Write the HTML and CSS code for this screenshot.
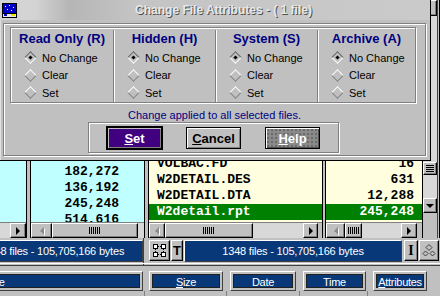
FILE: index.html
```html
<!DOCTYPE html>
<html lang="en">
<head>
  <meta charset="UTF-8">
  <meta name="viewport" content="width=device-width, initial-scale=1.0">
  <link rel="stylesheet" href="styles.css">
  <title>Change File Attributes</title>
</head>
<body>

  <div class="fm">
    <div class="panes">
      <div class="col col-a cyan">
        <div class="list"></div>
        <div class="hscroll">
          <div class="track"></div>
          <div class="sbtn sb-16"><span class="arr-r"></span></div>
        </div>
      </div>
      <div class="gap gap-3"></div>
      <div class="col col-b cyan">
        <div class="list list-b">
          <div class="row">97,152</div>
          <div class="row">182,272</div>
          <div class="row">136,192</div>
          <div class="row">245,248</div>
          <div class="row">514,616</div>
        </div>
        <div class="hscroll">
          <div class="sbtn sb-21"><span class="arr-l"></span></div>
          <div class="thumb th-86"><span class="grip"></span></div>
          <div class="track"></div>
        </div>
      </div>
      <div class="gap gap-3"></div>
      <div class="col col-c yellow">
        <div class="list list-c">
          <div class="row">VOLBAC.CF</div>
          <div class="row">VOLBAC.FD</div>
          <div class="row">W2DETAIL.DES</div>
          <div class="row">W2DETAIL.DTA</div>
          <div class="row sel">W2detail.rpt</div>
        </div>
        <div class="hscroll">
          <div class="sbtn sb-16"><span class="arr-l"></span></div>
          <div class="thumb th-88"><span class="grip"></span></div>
          <div class="track"></div>
          <div class="sbtn sb-15"><span class="arr-r"></span></div>
          <div class="pad-4"></div>
        </div>
      </div>
      <div class="gap gap-2"></div>
      <div class="col col-d yellow">
        <div class="list list-d">
          <div class="row">2,048</div>
          <div class="row">16</div>
          <div class="row">631</div>
          <div class="row">12,288</div>
          <div class="row sel">245,248</div>
        </div>
        <div class="hscroll">
          <div class="sbtn sb-19"><span class="arr-l"></span></div>
          <div class="thumb th-17"><span class="grip"></span></div>
          <div class="track"></div>
          <div class="sbtn sb-16"><span class="arr-r"></span></div>
          <div class="pad-5"></div>
        </div>
      </div>
      <div class="vscroll">
        <div class="vbtn vb-up"></div>
        <div class="vtrack vt-top"></div>
        <div class="vthumb"><span class="vgrip"></span></div>
        <div class="vtrack vt-mid"></div>
        <div class="vbtn vb-down"><span class="arr-d"></span></div>
        <div class="vcorner"></div>
      </div>
      <div class="edge"></div>
    </div>

    <div class="status">
      <div class="stat stat-left">1348 files - 105,705,166 bytes</div>
      <div class="vline"></div>
      <div class="ibtn ib-grid">
        <svg width="13" height="13" viewBox="0 0 13 13">
          <g fill="#fff" stroke="#000">
            <rect x="0.5" y="0.5" width="4" height="4"/>
            <rect x="8.5" y="0.5" width="4" height="4"/>
            <rect x="0.5" y="8.5" width="4" height="4"/>
            <rect x="8.5" y="8.5" width="4" height="4"/>
          </g>
          <path d="M5 2.5h3M5 10.5h3M2.5 5v3M10.5 5v3" stroke="#000" stroke-dasharray="1 1"/>
        </svg>
      </div>
      <div class="ibtn ib-t">T</div>
      <div class="stat stat-right">1348 files - 105,705,166 bytes</div>
      <div class="ibtn ib-i">I</div>
      <div class="ibtn ib-dia">
        <svg width="14" height="15" viewBox="0 0 14 15">
          <g fill="none" stroke="#404040">
            <path d="M7 1.5l3 3-3 3-3-3z"/>
            <path d="M3.5 8l2.5 2.5-2.5 2.5-2.5-2.5z"/>
            <path d="M10.5 8l2.5 2.5-2.5 2.5-2.5-2.5z"/>
          </g>
        </svg>
      </div>
    </div>

    <div class="sep"></div>

    <div class="hdr">
      <div class="hbtn hb-name"><span class="hin">Name</span></div>
      <div class="hbtn hb-size"><span class="hin"><u>S</u>ize</span></div>
      <div class="hbtn hb-date"><span class="hin">Date</span></div>
      <div class="hbtn hb-time"><span class="hin">Time</span></div>
      <div class="hbtn hb-attr"><span class="hin"><u>A</u>ttributes</span></div>
    </div>

    <div class="foot">
      <div class="fcell fc-1"></div>
      <div class="fcell fc-2"></div>
      <div class="fcell fc-3"></div>
      <div class="fcell fc-4"></div>
    </div>
  </div>

  <div class="dialog">
    <div class="titlebar">
      <svg class="ticon" width="15" height="15" viewBox="0 0 15 15">
        <rect x="0.5" y="0.5" width="14" height="14" fill="#e8e8e8" stroke="#000"/>
        <rect x="1" y="1" width="13" height="9" fill="#0000c8"/>
        <g fill="#fff">
          <rect x="3" y="3" width="1" height="1"/>
          <rect x="7" y="2" width="1" height="1"/>
          <rect x="11" y="4" width="1" height="1"/>
          <rect x="5" y="6" width="1" height="1"/>
          <rect x="9" y="7" width="1" height="1"/>
        </g>
        <rect x="1" y="10" width="13" height="1" fill="#000"/>
        <rect x="2" y="11" width="3" height="2" fill="#0000c8"/>
        <rect x="9" y="11" width="4" height="2" fill="#e8e800"/>
      </svg>
      <div class="ttext">Change File Attributes - ( 1 file)</div>
    </div>

    <div class="frame">
      <div class="groups">
        <div class="group">
          <div class="ghead">Read Only (R)</div>
          <div class="opt"><span class="dia on"></span>No Change</div>
          <div class="opt"><span class="dia"></span>Clear</div>
          <div class="opt"><span class="dia"></span>Set</div>
        </div>
        <div class="group">
          <div class="ghead">Hidden (H)</div>
          <div class="opt"><span class="dia on"></span>No Change</div>
          <div class="opt"><span class="dia"></span>Clear</div>
          <div class="opt"><span class="dia"></span>Set</div>
        </div>
        <div class="group">
          <div class="ghead">System (S)</div>
          <div class="opt"><span class="dia on"></span>No Change</div>
          <div class="opt"><span class="dia"></span>Clear</div>
          <div class="opt"><span class="dia"></span>Set</div>
        </div>
        <div class="group">
          <div class="ghead">Archive (A)</div>
          <div class="opt"><span class="dia on"></span>No Change</div>
          <div class="opt"><span class="dia"></span>Clear</div>
          <div class="opt"><span class="dia"></span>Set</div>
        </div>
      </div>

      <div class="note">Change applied to all selected files.</div>

      <div class="btnbox">
        <button class="btn btn-set"><u>S</u>et</button>
        <button class="btn"><u>C</u>ancel</button>
        <button class="btn btn-help"><u>H</u>elp</button>
      </div>
    </div>
  </div>

</body>
</html>
```

FILE: styles.css
```css
* {
  margin: 0;
  padding: 0;
  box-sizing: border-box;
}

body {
  width: 440px;
  height: 296px;
  overflow: hidden;
  position: relative;
  background: #c0c0c0;
  font-family: "Liberation Sans", Arial, sans-serif;
}

/* file manager behind the dialog */

.fm {
  display: flex;
  flex-direction: column;
  height: 296px;
}

.panes {
  display: flex;
  height: 238px;
}

.col {
  display: flex;
  flex-direction: column;
}

.cyan {
  background: #c0ffff;
}

.yellow {
  background: #ffffe0;
}

.col-a {
  width: 27px;
  border-right: 1px solid #000;
}

.col-b {
  width: 115px;
  border-left: 1px solid #000;
  border-right: 1px solid #000;
}

.col-c {
  width: 175px;
  border-left: 1px solid #000;
  border-right: 1px solid #000;
}

.col-d {
  width: 98px;
  border-left: 1px solid #000;
  border-right: 1px solid #000;
}

.gap {
  background: #c0c0c0;
}

.gap-3 {
  width: 3px;
}

.gap-2 {
  width: 2px;
}

.list {
  flex: 1;
  overflow: hidden;
  font-family: "Liberation Mono", "Courier New", monospace;
  font-weight: bold;
  font-size: 13px;
  color: #000;
}

.row {
  height: 16px;
  line-height: 16px;
  white-space: nowrap;
}

.list-b {
  padding-top: 148px;
  text-align: right;
}

.list-b .row {
  padding-right: 25px;
}

.list-c,
.list-d {
  padding-top: 140px;
}

.list-c .row {
  padding-left: 8px;
}

.list-d .row {
  text-align: right;
  padding-right: 8px;
}

.row.sel {
  background: #008000;
  color: #fff;
}

/* scroll bars */

.hscroll {
  display: flex;
  height: 16px;
  background: #c0c0c0;
  border-top: 1px solid #808080;
}

.track {
  flex: 1;
  background: #d8d8d8;
}

.sbtn {
  display: flex;
  align-items: center;
  justify-content: center;
  background: #c0c0c0;
  border: 1px solid;
  border-color: #fff #000 #000 #fff;
  box-shadow: inset -1px -1px #808080;
}

.sb-15 { width: 15px; }
.sb-16 { width: 16px; }
.sb-19 { width: 19px; }
.sb-21 { width: 21px; }

.pad-4 { width: 4px; }
.pad-5 { width: 5px; }

.arr-r {
  width: 0;
  height: 0;
  border-left: 4px solid #000;
  border-top: 4px solid transparent;
  border-bottom: 4px solid transparent;
}

.arr-l {
  width: 0;
  height: 0;
  border-right: 4px solid #8a8a8a;
  border-top: 4px solid transparent;
  border-bottom: 4px solid transparent;
  filter: drop-shadow(1px 1px 0 #fff);
}

.arr-d {
  width: 0;
  height: 0;
  border-top: 4px solid #000;
  border-left: 4px solid transparent;
  border-right: 4px solid transparent;
}

.thumb {
  display: flex;
  align-items: center;
  justify-content: center;
  background: #c0c0c0;
  border: 1px solid;
  border-color: #fff #000 #000 #fff;
  box-shadow: inset -1px -1px #808080;
}

.th-17 { width: 17px; }
.th-86 { width: 86px; }
.th-88 { width: 88px; }

.grip {
  width: 12px;
  height: 7px;
  background: repeating-linear-gradient(90deg, #000 0 1px, transparent 1px 2px);
}

.vscroll {
  width: 14px;
  display: flex;
  flex-direction: column;
  background: #c0c0c0;
}

.vtrack {
  background: #d8d8d8;
}

.vt-top { height: 146px; }
.vt-mid { height: 23px; }

.vbtn,
.vthumb {
  display: flex;
  align-items: center;
  justify-content: center;
  background: #c0c0c0;
  border: 1px solid;
  border-color: #fff #000 #000 #fff;
  box-shadow: inset -1px -1px #808080;
}

.vb-up { height: 16px; }
.vb-down { height: 15px; }

.vthumb {
  height: 13px;
}

.vgrip {
  width: 8px;
  height: 7px;
  background: repeating-linear-gradient(180deg, #000 0 1px, transparent 1px 2px);
}

.vcorner {
  flex: 1;
}

.edge {
  width: 3px;
  border-left: 1px solid #404040;
  border-right: 1px solid #000;
}

/* status line */

.status {
  display: flex;
  height: 24px;
  padding-top: 2px;
}

.stat {
  height: 22px;
  line-height: 20px;
  background: #083878;
  color: #fff;
  font-size: 11px;
  letter-spacing: -0.2px;
  text-align: center;
  white-space: nowrap;
  overflow: hidden;
  border: 1px solid;
  border-color: #fff #404040 #404040 #fff;
}

.stat-left {
  margin-left: -36px;
  width: 179px;
}

.stat-right {
  margin-left: 1px;
  width: 218px;
}

.vline {
  width: 1px;
  height: 28px;
  margin-top: -2px;
  background: #404040;
}

.ibtn {
  height: 21px;
  display: flex;
  align-items: center;
  justify-content: center;
  background: #c0c0c0;
  border: 1px solid;
  border-color: #fff #000 #000 #fff;
  box-shadow: inset -1px -1px #808080;
  font-weight: bold;
}

.ib-grid {
  margin-left: 5px;
  width: 21px;
}

.ib-t {
  margin-left: 1px;
  width: 12px;
  font-size: 13px;
}

.ib-i {
  margin-left: 2px;
  width: 14px;
  font-family: "Liberation Serif", "Times New Roman", serif;
  font-size: 14px;
}

.ib-dia {
  margin-left: 1px;
  width: 20px;
}

.sep {
  margin-top: 1px;
  height: 3px;
  border-top: 1px solid #fff;
  border-bottom: 1px solid #404040;
}

/* column headers */

.hdr {
  display: flex;
  height: 25px;
  padding-top: 5px;
}

.hbtn {
  height: 20px;
  padding: 2px;
  background: #c0c0c0;
  border: 1px solid;
  border-color: #fff #404040 #404040 #fff;
  overflow: hidden;
}

.hin {
  display: block;
  height: 100%;
  line-height: 14px;
  background: #083878;
  border: 1px solid #202020;
  color: #fff;
  font-size: 11px;
  letter-spacing: -0.3px;
  text-align: center;
  white-space: nowrap;
}

.hb-name {
  margin-left: -162px;
  width: 305px;
}

.hb-size {
  margin-left: 6px;
  width: 74px;
}

.hb-date {
  margin-left: 7px;
  width: 66px;
}

.hb-time {
  margin-left: 7px;
  width: 63px;
}

.hb-attr {
  margin-left: 7px;
  width: 54px;
}

.foot {
  display: flex;
  flex: 1;
}

.fcell {
  border-right: 1px solid #808080;
}

.fc-1 { width: 145px; }
.fc-2 { width: 82px; }
.fc-3 { width: 73px; }
.fc-4 { width: 68px; }

/* dialog window */

.dialog {
  position: absolute;
  left: 0;
  top: 0;
  width: 431px;
  height: 161px;
  background: #c0c0c0;
  border-right: 1px solid #000;
  border-bottom: 1px solid #000;
  box-shadow: inset 1px 1px #e0e0e0;
}

.titlebar {
  height: 20px;
  display: flex;
  align-items: center;
  background: linear-gradient(90deg, #d4d4d4 0, #d4d4d4 8%, #b6b6b6 16%, #c4c4c4 32%, #cacaca 100%);
}

.ticon {
  margin-left: 2px;
  flex: none;
}

.ttext {
  flex: 1;
  text-align: center;
  font-size: 12px;
  font-weight: bold;
  color: #e8e8e8;
  text-shadow: 1px 1px 0 #505050;
  white-space: nowrap;
}

.frame {
  margin: 3px 0 0 3px;
  width: 423px;
  height: 133px;
  border: 1px solid #808080;
  box-shadow: 1px 1px 0 #fff, inset 1px 1px 0 #fff;
}

.groups {
  margin: 3px 0 0 6px;
  width: 406px;
  height: 76px;
  border: 1px solid #808080;
  box-shadow: 1px 1px 0 #fff, inset 1px 1px 0 #fff;
  display: grid;
  grid-template-columns: 102px 102px 102px 1fr;
}

.group {
  margin: 2px 0;
}

.group + .group {
  border-left: 1px solid #808080;
  box-shadow: inset 1px 0 #fff;
}

.ghead {
  margin: 1px 0 2px;
  line-height: 16px;
  text-align: center;
  font-size: 13px;
  font-weight: bold;
  color: #000080;
  white-space: nowrap;
}

.opt {
  display: flex;
  align-items: center;
  height: 17.5px;
  padding-left: 13px;
  font-size: 11px;
  color: #000;
  white-space: nowrap;
}

.dia {
  display: flex;
  align-items: center;
  justify-content: center;
  flex: none;
  width: 9px;
  height: 9px;
  margin: 0 7px 0 2px;
  transform: rotate(45deg);
  border: 1px solid;
  border-color: #fff #808080 #808080 #fff;
}

.dia.on {
  border-color: #606060 #fff #fff #606060;
}

.dia.on::after {
  content: "";
  width: 3px;
  height: 3px;
  background: #000;
}

.note {
  margin-top: 5px;
  line-height: 14px;
  text-align: center;
  font-size: 11px;
  color: #000080;
}

.btnbox {
  margin-left: 84px;
  width: 251px;
  height: 31px;
  display: flex;
  gap: 24px;
  padding: 4px 17px 0 18px;
  border: 1px solid #808080;
  box-shadow: 1px 1px 0 #fff, inset 1px 1px 0 #fff;
}

.btn {
  width: 55px;
  height: 22px;
  padding: 0;
  font-family: "Liberation Sans", Arial, sans-serif;
  font-size: 13px;
  font-weight: bold;
  color: #000;
  background: #c0c0c0;
  border: 1px solid #000;
  box-shadow: inset 1px 1px #fff, inset -1px -1px #808080;
}

.btn-set {
  background: #400080;
  color: #fff;
  outline: 1px solid #000;
  box-shadow: inset 1px 1px #c0c0c0, inset -1px -1px #808080;
}

.btn-help {
  color: #fff;
  background-color: #8a8a8a;
  background-image: radial-gradient(#6a6a6a 0.7px, transparent 1px);
  background-size: 4px 4px;
  box-shadow: inset 1px 1px #fff, inset -1px -1px #505050;
}
```
